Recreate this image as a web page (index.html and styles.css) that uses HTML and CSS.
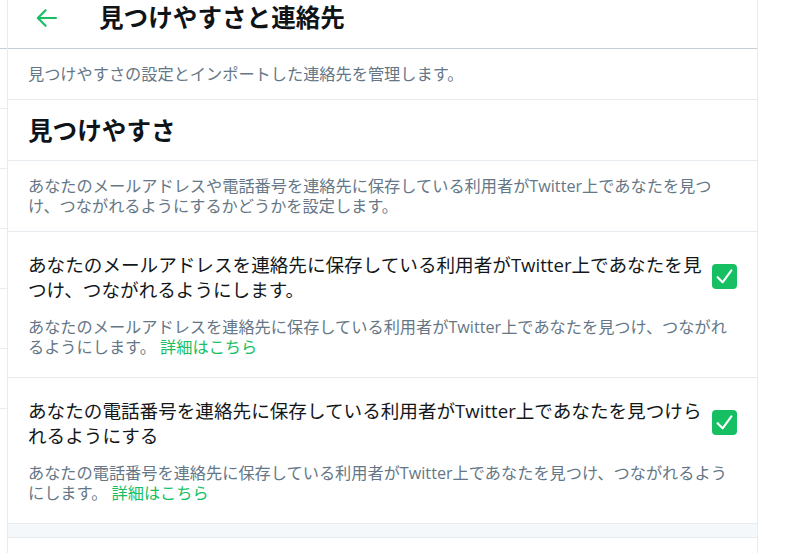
FILE: index.html
```html
<!DOCTYPE html>
<html lang="ja">
<head>
<meta charset="utf-8">
<title>見つけやすさと連絡先</title>
<link rel="stylesheet" href="styles.css">
</head>
<body>
<div class="page">
  <aside class="sidebar">
    <div class="side-head"></div>
    <div class="side-item"></div>
    <div class="side-item"></div>
    <div class="side-item"></div>
    <div class="side-item"></div>
    <div class="side-item"></div>
    <div class="side-item"></div>
  </aside>
  <main class="main">
    <header class="header">
      <span class="back">
        <svg viewBox="0 0 22 22" width="22" height="22" aria-hidden="true">
          <path d="M20 11H1.8M9.6 3.2L1.8 11l7.8 7.8" fill="none" stroke="#17bf63" stroke-width="2.1" stroke-linecap="round" stroke-linejoin="round"/>
        </svg>
      </span>
      <h1 class="title">見つけやすさと連絡先</h1>
    </header>
    <p class="desc">見つけやすさの設定とインポートした連絡先を管理します。</p>
    <h2 class="heading">見つけやすさ</h2>
    <p class="desc">あなたのメールアドレスや電話番号を連絡先に保存している利用者がTwitter上であなたを見つけ、つながれるようにするかどうかを設定します。</p>
    <div class="row">
      <div class="row-head">
        <div class="row-label">あなたのメールアドレスを連絡先に保存している利用者がTwitter上であなたを見つけ、つながれるようにします。</div>
        <span class="check">
          <svg viewBox="0 0 25 25" width="25" height="25" aria-hidden="true">
            <polyline points="5.6,13.2 10.6,18.3 19.4,6.4" fill="none" stroke="#fff" stroke-width="2.1" stroke-linecap="round" stroke-linejoin="round"/>
          </svg>
        </span>
      </div>
      <div class="row-sub">あなたのメールアドレスを連絡先に保存している利用者がTwitter上であなたを見つけ、つながれるようにします。 <a class="link" href="#">詳細はこちら</a></div>
    </div>
    <div class="row">
      <div class="row-head">
        <div class="row-label">あなたの電話番号を連絡先に保存している利用者がTwitter上であなたを見つけられるようにする</div>
        <span class="check">
          <svg viewBox="0 0 25 25" width="25" height="25" aria-hidden="true">
            <polyline points="5.6,13.2 10.6,18.3 19.4,6.4" fill="none" stroke="#fff" stroke-width="2.1" stroke-linecap="round" stroke-linejoin="round"/>
          </svg>
        </span>
      </div>
      <div class="row-sub">あなたの電話番号を連絡先に保存している利用者がTwitter上であなたを見つけ、つながれるようにします。 <a class="link" href="#">詳細はこちら</a></div>
    </div>
    <div class="band"></div>
    <div class="after"></div>
  </main>
</div>
</body>
</html>
```
FILE: styles.css
```css
html, body {
  margin: 0;
  padding: 0;
  background: #ffffff;
}
body {
  font-family: "Open Sans", "Noto Sans CJK JP", sans-serif;
  color: #14171a;
  text-spacing-trim: space-all;
}
.page {
  display: flex;
  align-items: stretch;
  min-height: 553px;
}
.sidebar {
  width: 7px;
  flex: 0 0 7px;
}
.side-head {
  height: 48px;
  border-bottom: 1px solid #c4cfd6;
}
.side-item {
  height: 59px;
  border-bottom: 1px solid #e6ecf0;
}
.main {
  width: 749px;
  flex: 0 0 749px;
  border-left: 1px solid #e6ecf0;
  border-right: 1px solid #e6ecf0;
  display: flex;
  flex-direction: column;
}
.header {
  box-sizing: border-box;
  height: 49px;
  padding: 0 0 12px 28px;
  border-bottom: 1px solid #c4cfd6;
  display: flex;
  align-items: center;
}
.back {
  display: flex;
  width: 22px;
  height: 22px;
}
.title {
  margin: 0 0 0 41px;
  font-size: 24.6px;
  line-height: 30px;
  font-weight: 700;
  color: #0f1419;
}
.desc {
  margin: 0;
  padding: 15px 20px 14px;
  font-size: 16.2px;
  line-height: 20.5px;
  color: #657786;
  border-bottom: 1px solid #e6ecf0;
}
.heading {
  margin: 0;
  padding: 16px 20px 14px;
  font-size: 24.6px;
  line-height: 30px;
  font-weight: 700;
  color: #0f1419;
  border-bottom: 1px solid #e6ecf0;
}
.row {
  padding: 20px 20px 19px;
  border-bottom: 1px solid #e6ecf0;
}
.row-head {
  display: flex;
  align-items: center;
}
.row-label {
  flex: 1 1 auto;
  min-width: 0;
  font-size: 18.6px;
  line-height: 25px;
  color: #14171a;
}
.check {
  flex: 0 0 25px;
  width: 25px;
  height: 25px;
  border-radius: 4px;
  background: #17bf63;
  display: flex;
}
.row-sub {
  margin-top: 15px;
  font-size: 16.2px;
  line-height: 20.5px;
  color: #657786;
}
.link {
  color: #17bf63;
  text-decoration: none;
}
.band {
  height: 13px;
  background: #f5f8fa;
  border-bottom: 1px solid #e6ecf0;
}
.after {
  flex: 1 1 auto;
}
```
